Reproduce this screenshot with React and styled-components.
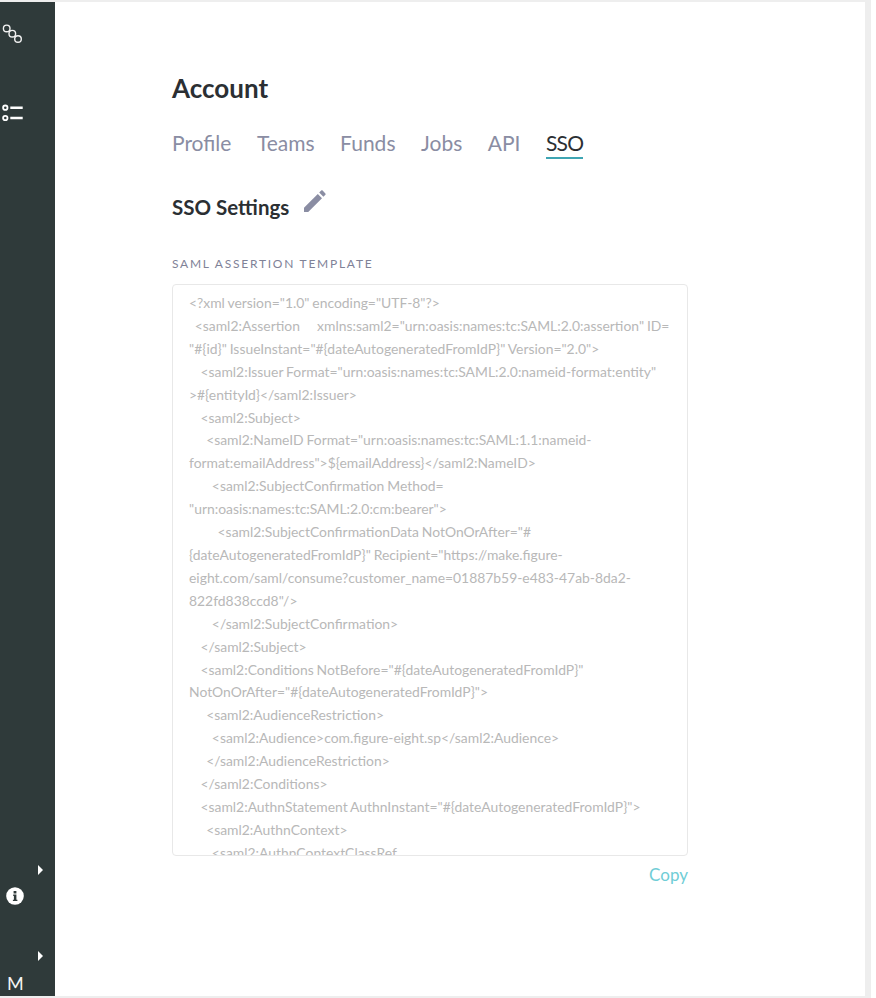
import styled, { createGlobalStyle } from "styled-components";

const samlTemplate = `<?xml version="1.0" encoding="UTF-8"?>
  <saml2:Assertion      xmlns:saml2="urn:oasis:names:tc:SAML:2.0:assertion" ID=
"#{id}" IssueInstant="#{dateAutogeneratedFromIdP}" Version="2.0">
    <saml2:Issuer Format="urn:oasis:names:tc:SAML:2.0:nameid-format:entity"
>#{entityId}</saml2:Issuer>
    <saml2:Subject>
      <saml2:NameID Format="urn:oasis:names:tc:SAML:1.1:nameid-
format:emailAddress">\${emailAddress}</saml2:NameID>
        <saml2:SubjectConfirmation Method=
"urn:oasis:names:tc:SAML:2.0:cm:bearer">
          <saml2:SubjectConfirmationData NotOnOrAfter="#
{dateAutogeneratedFromIdP}" Recipient="https://make.figure-
eight.com/saml/consume?customer_name=01887b59-e483-47ab-8da2-
822fd838ccd8"/>
        </saml2:SubjectConfirmation>
    </saml2:Subject>
    <saml2:Conditions NotBefore="#{dateAutogeneratedFromIdP}"
NotOnOrAfter="#{dateAutogeneratedFromIdP}">
      <saml2:AudienceRestriction>
        <saml2:Audience>com.figure-eight.sp</saml2:Audience>
      </saml2:AudienceRestriction>
    </saml2:Conditions>
    <saml2:AuthnStatement AuthnInstant="#{dateAutogeneratedFromIdP}">
      <saml2:AuthnContext>
        <saml2:AuthnContextClassRef
`;

const tabs = ["Profile", "Teams", "Funds", "Jobs", "API", "SSO"];

const GlobalStyle = createGlobalStyle`
  html, body {
    margin: 0;
    padding: 0;
    background: #fff;
  }
  * {
    box-sizing: border-box;
  }
`;

const Frame = styled.div`
  width: 871px;
  height: 998px;
  padding: 2px 6px 2px 0;
  background: #eee;
  font-family: Lato, "Open Sans", sans-serif;
  overflow: hidden;
`;

const Window = styled.div`
  display: flex;
  height: 994px;
  background: #fff;
`;

const Sidebar = styled.nav`
  display: flex;
  flex-direction: column;
  flex: 0 0 55px;
  color: #fff;
  background: #2f3a3a;
`;

const NavIcon = styled.div`
  display: flex;
  height: ${(p) => p.$height}px;
  margin-bottom: ${(p) => p.$bottom || 0}px;
  padding-left: ${(p) => p.$left}px;
  align-items: flex-end;
`;

const Spacer = styled.div`
  flex: 1;
`;

const Flyout = styled.div`
  display: flex;
  justify-content: flex-end;
  padding: 0 12px 0 0;
  margin-bottom: ${(p) => p.$bottom}px;
`;

const Caret = styled.span`
  width: 0;
  height: 0;
  border-top: 5px solid transparent;
  border-bottom: 5px solid transparent;
  border-left: 5px solid #fff;
`;

const UserInitial = styled.div`
  padding: 0 0 3px 7px;
  font-size: 18px;
  line-height: 20px;
  font-weight: 400;
  color: #f4f4f4;
`;

const Main = styled.main`
  flex: 1;
  padding: 70px 0 0 117px;
`;

const Content = styled.div`
  width: 516px;
`;

const PageTitle = styled.h1`
  margin: 0;
  font-size: 26px;
  line-height: 32px;
  font-weight: 700;
  color: #2b2f33;
`;

const Tabs = styled.div`
  display: flex;
  gap: 25.5px;
  margin-top: 25px;
`;

const Tab = styled.a`
  font-size: 21px;
  line-height: 28px;
  letter-spacing: ${(p) => (p.$active ? "-0.8px" : "0")};
  color: ${(p) => (p.$active ? "#2b2f33" : "#8a8da3")};
  border-bottom: 2px solid ${(p) => (p.$active ? "#3ea5b3" : "transparent")};
`;

const SectionHeader = styled.div`
  display: flex;
  align-items: flex-start;
  gap: 14px;
  height: 40px;
  margin-top: 26px;
`;

const SectionTitle = styled.h2`
  margin: 9px 0 0;
  font-size: 20.5px;
  line-height: 26px;
  font-weight: 700;
  color: #2b2f33;
`;

const EditIcon = styled.svg`
  margin-top: 4px;
  fill: #8a8da3;
`;

const FieldLabel = styled.label`
  display: block;
  margin-top: 31px;
  font-size: 12px;
  line-height: 16px;
  letter-spacing: 1.75px;
  color: #7f8297;
  text-transform: uppercase;
`;

const TemplateBox = styled.textarea`
  display: block;
  width: 100%;
  height: 572px;
  margin-top: 12px;
  padding: 7px 16px;
  font-family: inherit;
  font-size: 13.9px;
  line-height: 22.9px;
  word-spacing: -0.7px;
  white-space: pre;
  color: #b8b8b8;
  background: #fff;
  border: 1px solid #e8e8e8;
  border-radius: 4px;
  outline: none;
  resize: none;
  overflow: hidden;
`;

const CopyRow = styled.div`
  display: flex;
  justify-content: flex-end;
  margin-top: 8px;
`;

const CopyLink = styled.a`
  font-size: 17px;
  line-height: 22px;
  color: #70cdd6;
`;

function LinkIcon() {
  return (
    <svg width="24" height="24" viewBox="0 0 24 24" fill="none" stroke="#f2f2f2" strokeWidth="1.4">
      <circle cx="6.7" cy="6.4" r="3.3" />
      <circle cx="12.3" cy="11.7" r="3.3" />
      <circle cx="18" cy="17" r="3.3" />
    </svg>
  );
}

function ListIcon() {
  return (
    <svg width="24" height="18" viewBox="0 0 24 18" fill="none" stroke="#fff">
      <circle cx="5.3" cy="3.7" r="2.2" strokeWidth="1.8" />
      <circle cx="5.3" cy="14" r="2.2" strokeWidth="1.8" />
      <path d="M10.3 3.7h12.4M10.3 14h12.4" strokeWidth="2.6" />
    </svg>
  );
}

function InfoIcon() {
  return (
    <svg width="18" height="18" viewBox="0 0 18 18">
      <circle cx="9" cy="9" r="8.8" fill="#fff" />
      <path d="M7.6 4h2.8v2.4H7.6zM7.2 7.6h3.2v5.2h1v1.3H6.9v-1.3h1V8.9h-.7z" fill="#2f3a3a" />
    </svg>
  );
}

function PencilIcon() {
  return (
    <EditIcon width="24" height="24" viewBox="0 0 24 24">
      <path d="M1 23v-4.2L14.8 5l4.2 4.2L5.2 23zM16.2 3.6l2-2c.4-.4 1-.4 1.4 0l2.8 2.8c.4.4.4 1 0 1.4l-2 2z" />
    </EditIcon>
  );
}

export default function App() {
  return (
    <>
      <GlobalStyle />
      <Frame>
        <Window>
          <Sidebar>
            <NavIcon $height={44} $left={0}>
              <LinkIcon />
            </NavIcon>
            <NavIcon $height={76} $left={0}>
              <ListIcon />
            </NavIcon>
            <Spacer />
            <Flyout $bottom={12}>
              <Caret />
            </Flyout>
            <NavIcon $height={18} $left={6} $bottom={46}>
              <InfoIcon />
            </NavIcon>
            <Flyout $bottom={12}>
              <Caret />
            </Flyout>
            <UserInitial>M</UserInitial>
          </Sidebar>
          <Main>
            <Content>
              <PageTitle>Account</PageTitle>
              <Tabs>
                {tabs.map((tab) => (
                  <Tab key={tab} $active={tab === "SSO"}>
                    {tab}
                  </Tab>
                ))}
              </Tabs>
              <SectionHeader>
                <SectionTitle>SSO Settings</SectionTitle>
                <PencilIcon />
              </SectionHeader>
              <FieldLabel>SAML Assertion Template</FieldLabel>
              <TemplateBox readOnly value={samlTemplate} />
              <CopyRow>
                <CopyLink>Copy</CopyLink>
              </CopyRow>
            </Content>
          </Main>
        </Window>
      </Frame>
    </>
  );
}
